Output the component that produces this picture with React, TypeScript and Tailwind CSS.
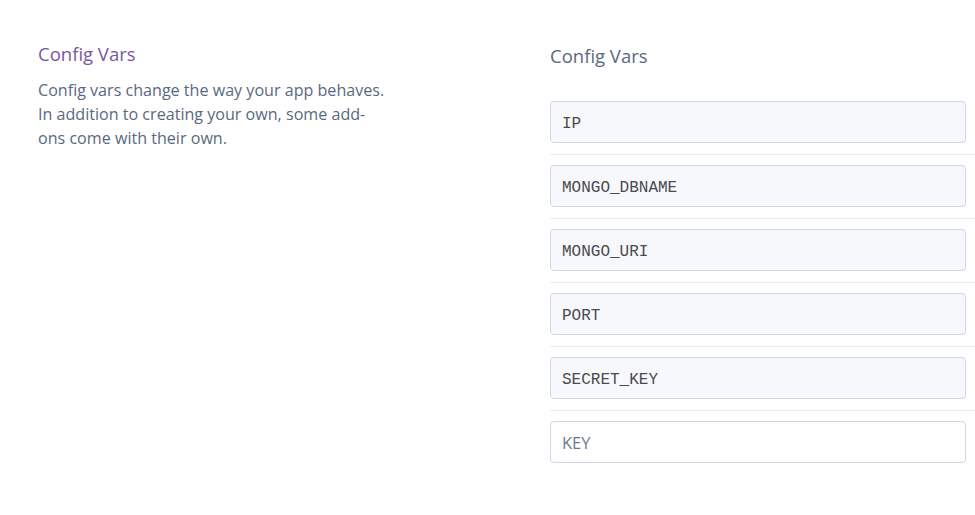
import React from "react";

const vars = ["IP", "MONGO_DBNAME", "MONGO_URI", "PORT", "SECRET_KEY"];

const ConfigRow: React.FC<{ name: string }> = ({ name }) => (
  <div className="pt-[10px] pb-[11px] border-b border-[#e8ebf2]">
    <div className="w-[416px] h-[42px] flex items-center px-[11px] pt-[3px] rounded-[4px] border border-[#cfd7e6] bg-[#f7f8fb] font-['Liberation_Mono',monospace] text-[16px] text-[#4a4a50]">
      {name}
    </div>
  </div>
);

export default function App() {
  return (
    <div className="w-[975px] h-[515px] bg-white flex font-['Open_Sans',sans-serif] overflow-hidden">
      <div className="w-[512px] pl-[38px] pt-[40px] shrink-0">
        <h2 className="text-[18.5px] leading-[28px] text-[#79589f]">Config Vars</h2>
        <p className="mt-[10px] w-[350px] text-[16.1px] leading-[24px] text-[#596981]">
          Config vars change the way your app behaves. In addition to creating your own, some add-ons come with their own.
        </p>
      </div>
      <div className="flex-1 pl-[38px] pt-[42px]">
        <h3 className="text-[18.5px] leading-[28px] text-[#596981]">Config Vars</h3>
        <div className="mt-[21px]">
          {vars.map((v) => (
            <ConfigRow key={v} name={v} />
          ))}
          <div className="pt-[10px]">
            <div className="w-[416px] h-[42px] flex items-center px-[11px] pt-[2px] rounded-[4px] border border-[#cfd7e6] bg-white text-[16.5px] text-[#6b7a94]">
              KEY
            </div>
          </div>
        </div>
      </div>
    </div>
  );
}
